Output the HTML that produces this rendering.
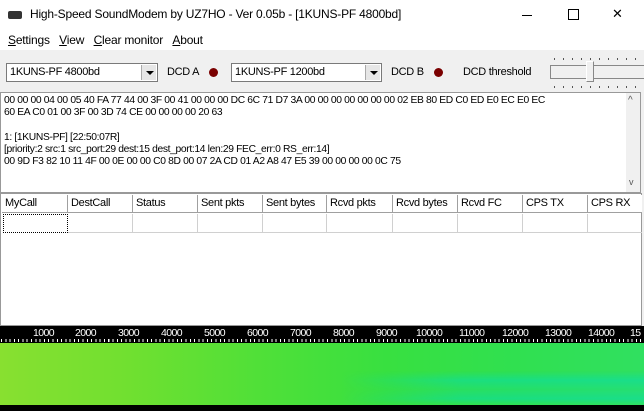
<!DOCTYPE html><html><head><style>
*{margin:0;padding:0;box-sizing:border-box}
body{width:644px;height:411px;overflow:hidden;background:#f0f0f0;font-family:"Liberation Sans",sans-serif;position:relative;font-size:12px;color:#000}
.a{position:absolute}
.t{font-size:11px;letter-spacing:-0.3px;white-space:nowrap}
.cb{position:absolute;top:63px;height:19px;background:#fff;border:1px solid #7a7a7a;font-size:11px;padding:2px 3px;letter-spacing:-0.3px}
.cb i{position:absolute;right:1px;top:1px;width:15px;height:15px;background:#e6e6e6;border-left:1px solid #aaa}
.cb i:after{content:"";position:absolute;left:4px;top:6px;border:4px solid transparent;border-top:4px solid #000;border-bottom:0}
.dot{position:absolute;top:68px;width:9px;height:9px;border-radius:50%;background:#7a0000}
.memo{font-size:10.3px;letter-spacing:-0.35px;line-height:12.2px;white-space:pre}
.hd{position:absolute;top:195px;height:18px;border-right:1px solid #a0a0a0;font-size:11px;padding:2px 3px;letter-spacing:-0.3px;background:#fff;border-bottom:1px solid #a0a0a0}
.cl{position:absolute;top:214px;height:19px;border-right:1px solid #d0d0d0;border-bottom:1px solid #d0d0d0}
.rl{position:absolute;top:327px;color:#fff;font-size:10.5px;letter-spacing:-0.6px}
</style></head><body>
<div class="a" style="left:0;top:0;width:644px;height:30px;background:#fff"></div>
<div class="a" style="left:8px;top:11px;width:14px;height:8px;background:#333;border-radius:2px"></div>
<div class="a" style="left:30px;top:7px;font-size:12px;letter-spacing:-0.2px">High-Speed SoundModem by UZ7HO - Ver 0.05b - [1KUNS-PF 4800bd]</div>
<div class="a" style="left:522px;top:15px;width:10px;height:1px;background:#000"></div>
<div class="a" style="left:568px;top:9px;width:11px;height:11px;border:1px solid #000"></div>
<div class="a" style="left:612px;top:6px;font-size:13px">✕</div>
<div class="a" style="left:0;top:30px;width:644px;height:20px;background:#fff"></div>
<div class="a" style="left:8px;top:33px;font-size:12px;letter-spacing:-0.2px"><u>S</u>ettings&nbsp;&nbsp;&nbsp;<u>V</u>iew&nbsp;&nbsp;&nbsp;<u>C</u>lear monitor&nbsp;&nbsp;&nbsp;<u>A</u>bout</div>
<div class="cb" style="left:6px;width:152px">1KUNS-PF 4800bd<i></i></div>
<div class="a t" style="left:167px;top:66px">DCD A</div><div class="dot" style="left:209px"></div>
<div class="cb" style="left:231px;width:151px">1KUNS-PF 1200bd<i></i></div>
<div class="a t" style="left:391px;top:66px">DCD B</div><div class="dot" style="left:434px"></div>
<div class="a t" style="left:463px;top:66px">DCD threshold</div>
<div class="a" style="left:550px;top:65px;width:94px;height:14px;border:1px solid #888;border-right:0;background:#f0f0f0"></div>
<div class="a" style="left:586px;top:61px;width:8px;height:21px;background:#f0f0f0;border:1px solid #888;border-top-color:#fff;border-left-color:#fff"></div>
<div class="a" style="left:554px;top:58px;width:90px;height:2px;background:repeating-linear-gradient(90deg,#555 0 1px,transparent 1px 9px)"></div>
<div class="a" style="left:554px;top:86px;width:90px;height:2px;background:repeating-linear-gradient(90deg,#555 0 1px,transparent 1px 9px)"></div>
<div class="a" style="left:0;top:92px;width:641px;height:101px;background:#fff;border:1px solid #999"></div>
<div class="a memo" style="left:4px;top:95px">00 00 00 04 00 05 40 FA 77 44 00 3F 00 41 00 00 00 DC 6C 71 D7 3A 00 00 00 00 00 00 00 02 EB 80 ED C0 ED E0 EC E0 EC
60 EA C0 01 00 3F 00 3D 74 CE 00 00 00 00 20 63

1: [1KUNS-PF] [22:50:07R]
[priority:2 src:1 src_port:29 dest:15 dest_port:14 len:29 FEC_err:0 RS_err:14]
00 9D F3 82 10 11 4F 00 0E 00 00 C0 8D 00 07 2A CD 01 A2 A8 47 E5 39 00 00 00 00 0C 75</div>
<div class="a" style="left:626px;top:93px;width:14px;height:99px;background:#f0f0f0"></div>
<div class="a" style="left:628px;top:95px;font-size:10px;color:#555">^</div>
<div class="a" style="left:629px;top:177px;font-size:9px;color:#555">v</div>
<div class="a" style="left:0;top:193px;width:642px;height:133px;background:#fff;border:1px solid #999"></div>
<div class="hd" style="left:2px;width:66px">MyCall</div>
<div class="hd" style="left:68px;width:65px">DestCall</div>
<div class="hd" style="left:133px;width:65px">Status</div>
<div class="hd" style="left:198px;width:65px">Sent pkts</div>
<div class="hd" style="left:263px;width:64px">Sent bytes</div>
<div class="hd" style="left:327px;width:66px">Rcvd pkts</div>
<div class="hd" style="left:393px;width:65px">Rcvd bytes</div>
<div class="hd" style="left:458px;width:65px">Rcvd FC</div>
<div class="hd" style="left:523px;width:65px">CPS TX</div>
<div class="hd" style="left:588px;width:54px;border-right:0">CPS RX</div>
<div class="cl" style="left:3px;width:65px;border:1px dotted #000"></div>
<div class="cl" style="left:68px;width:65px"></div><div class="cl" style="left:133px;width:65px"></div>
<div class="cl" style="left:198px;width:65px"></div><div class="cl" style="left:263px;width:64px"></div>
<div class="cl" style="left:327px;width:66px"></div><div class="cl" style="left:393px;width:65px"></div>
<div class="cl" style="left:458px;width:65px"></div><div class="cl" style="left:523px;width:65px"></div>
<div class="cl" style="left:588px;width:54px;border-right:0"></div>
<div class="a" style="left:0;top:326px;width:644px;height:17px;background:#000"></div>
<div class="a" style="left:0;top:339px;width:644px;height:3px;background:repeating-linear-gradient(90deg,transparent 0 1px,#fff 1px 2px,transparent 2px 4.29px)"></div>
<div class="rl" style="left:33px">1000</div><div class="rl" style="left:75px">2000</div><div class="rl" style="left:118px">3000</div><div class="rl" style="left:161px">4000</div><div class="rl" style="left:204px">5000</div><div class="rl" style="left:247px">6000</div><div class="rl" style="left:290px">7000</div><div class="rl" style="left:333px">8000</div><div class="rl" style="left:376px">9000</div><div class="rl" style="left:416px">10000</div><div class="rl" style="left:459px">11000</div><div class="rl" style="left:502px">12000</div><div class="rl" style="left:545px">13000</div><div class="rl" style="left:588px">14000</div><div class="rl" style="left:630px">15</div>
<div class="a" style="left:0;top:343px;width:644px;height:62px;background:linear-gradient(90deg,#88e030 0%,#70e030 20%,#50e038 40%,#38e040 60%,#30e050 80%,#30e060 100%)"></div>
<div class="a" style="left:340px;top:343px;width:304px;height:62px;background:linear-gradient(180deg,transparent 0%,transparent 45%,rgba(0,220,190,.45) 60%,rgba(0,220,190,.2) 75%,rgba(0,220,190,.45) 90%,transparent 100%);-webkit-mask:linear-gradient(90deg,transparent,#000 40%)"></div>
<div class="a" style="left:0;top:405px;width:644px;height:6px;background:#000"></div>
</body></html>
